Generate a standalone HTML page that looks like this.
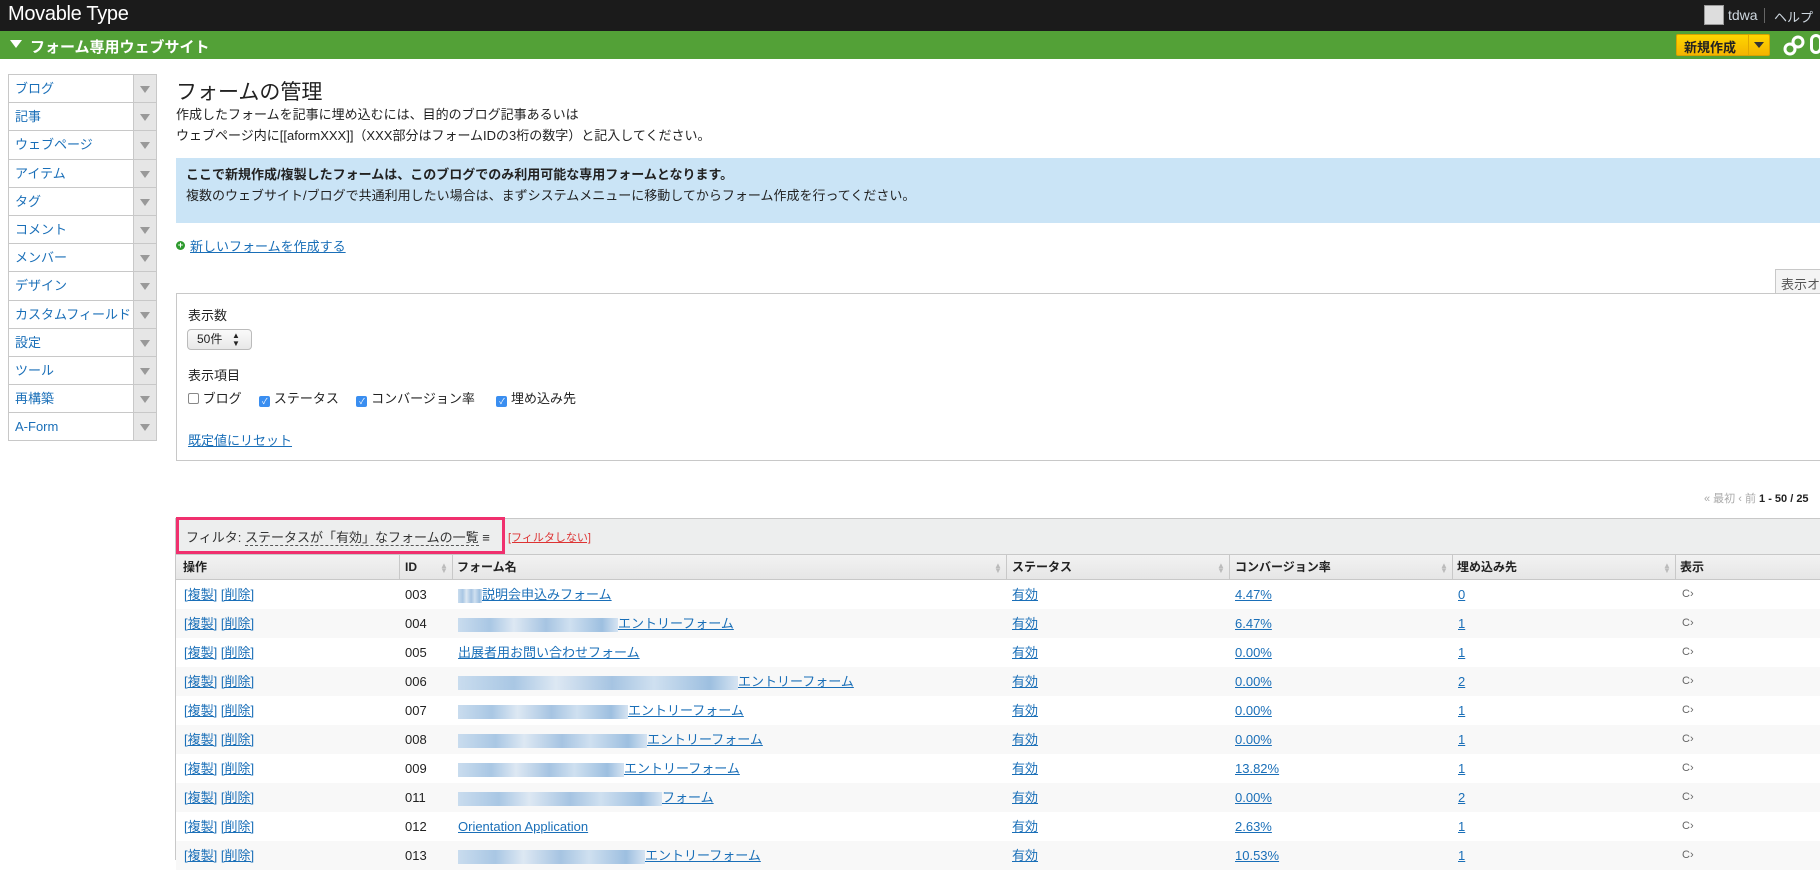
<!DOCTYPE html>
<html><head><meta charset="utf-8"><style>
*{box-sizing:border-box;margin:0;padding:0}
body{width:1820px;height:860px;overflow:hidden;background:#fff;font-family:"Liberation Sans","Noto Sans CJK JP",sans-serif;color:#222;position:relative;font-size:14px}
a{color:#1a6fb8}
.abs{position:absolute}
#top{left:0;top:0;width:1820px;height:31px;background:#1b1b1b}
#green{left:0;top:31px;width:1820px;height:28px;background:#53a137}
.side{left:8px;top:74px;width:149px;border:1px solid #c8c8c8;border-bottom:none}
.side div{height:28.2px;border-bottom:1px solid #c8c8c8;position:relative;font-size:13px;color:#1a6fb8;padding-left:6px;line-height:27px}
.side div:after{content:"";position:absolute;right:0;top:0;width:22px;height:100%;background:#e6e6e6;border-left:1px solid #c8c8c8}
.side div span{position:absolute;right:6px;top:11px;width:0;height:0;border-left:5px solid transparent;border-right:5px solid transparent;border-top:7px solid #999;z-index:2}
.row{position:absolute;left:176px;width:1644px;height:29px;font-size:13px;line-height:29px}
.row span{position:absolute}
.blur{display:inline-block;height:14px;vertical-align:middle;background:linear-gradient(90deg,#c9dcee,#a9c7e4 20%,#dde8f3 35%,#a6c4e2 55%,#cfe0f0 70%,#9dbfe0 90%,#d6e4f2)}
.th{position:absolute;top:0;font-size:12px;font-weight:bold;line-height:25px}
.sep{position:absolute;top:0;width:1px;height:25px;background:#c8c8c8}
.sort{position:absolute;top:8px;color:#bbb;font-size:8px;line-height:5px}
.cb{display:inline-block;width:11px;height:11px;background:#3a8ef0;border-radius:2px;vertical-align:-1px;color:#fff;font-size:8px;line-height:11px;text-align:center}
</style></head><body>
<div id="top" class="abs"></div>
<div class="abs" style="left:8px;top:3px;color:#fff;font-size:20px;letter-spacing:-0.3px">Movable Type</div>
<div class="abs" style="left:1704px;top:5px;width:20px;height:20px;background:#ddd;border:1px solid #999"></div>
<div class="abs" style="left:1728px;top:7px;color:#cfd8e0;font-size:14px">tdwa</div>
<div class="abs" style="left:1764px;top:8px;width:1px;height:15px;background:#666"></div>
<div class="abs" style="left:1774px;top:7px;color:#cfd8e0;font-size:13px">ヘルプ</div>
<div id="green" class="abs"></div>
<div class="abs" style="left:10px;top:40px;width:0;height:0;border-left:6px solid transparent;border-right:6px solid transparent;border-top:8px solid #fff"></div>
<div class="abs" style="left:30px;top:36px;color:#fff;font-size:15px;font-weight:bold">フォーム専用ウェブサイト</div>
<div class="abs" style="left:1676px;top:34px;width:94px;height:22px;background:linear-gradient(#ffd600,#f4b400);border-radius:2px;border:1px solid #d9a200"></div>
<div class="abs" style="left:1684px;top:37px;font-size:13px;font-weight:bold;color:#222">新規作成</div>
<div class="abs" style="left:1748px;top:35px;width:1px;height:20px;background:#e0a800"></div>
<div class="abs" style="left:1754px;top:42px;border-left:5px solid transparent;border-right:5px solid transparent;border-top:6px solid #333"></div>
<svg class="abs" style="left:1782px;top:34px" width="24" height="24" viewBox="0 0 24 24"><circle cx="8" cy="15" r="5" fill="none" stroke="#fff" stroke-width="3"/><circle cx="16" cy="8" r="5" fill="none" stroke="#fff" stroke-width="3"/></svg>
<div class="abs" style="left:1810px;top:34px;width:12px;height:20px;border:3px solid #fff;border-radius:8px"></div>

<div class="abs side">
<div>ブログ<span></span></div><div>記事<span></span></div><div>ウェブページ<span></span></div><div>アイテム<span></span></div><div>タグ<span></span></div><div>コメント<span></span></div><div>メンバー<span></span></div><div>デザイン<span></span></div><div>カスタムフィールド<span></span></div><div>設定<span></span></div><div>ツール<span></span></div><div>再構築<span></span></div><div>A-Form<span></span></div>
</div>

<div class="abs" style="left:176px;top:76px;font-size:21px">フォームの管理</div>
<div class="abs" style="left:176px;top:104px;font-size:13px;line-height:21px">作成したフォームを記事に埋め込むには、目的のブログ記事あるいは<br>ウェブページ内に[[aformXXX]]（XXX部分はフォームIDの3桁の数字）と記入してください。</div>
<div class="abs" style="left:176px;top:158px;width:1644px;height:65px;background:#cae4f6"></div>
<div class="abs" style="left:186px;top:164px;font-size:13px;line-height:21px"><b>ここで新規作成/複製したフォームは、このブログでのみ利用可能な専用フォームとなります。</b><br>複数のウェブサイト/ブログで共通利用したい場合は、まずシステムメニューに移動してからフォーム作成を行ってください。</div>
<div class="abs" style="left:176px;top:241px;width:9px;height:9px;border-radius:50%;background:#2e9a2e;color:#fff;font-size:9px;line-height:9px;text-align:center;font-weight:bold">+</div>
<div class="abs" style="left:190px;top:236px;font-size:13px"><a href="#">新しいフォームを作成する</a></div>

<div class="abs" style="left:1775px;top:269px;width:50px;height:25px;border:1px solid #c8c8c8;border-bottom:none;background:#f4f4f4;font-size:13px;padding:4px 0 0 5px;color:#555">表示オ</div>
<div class="abs" style="left:176px;top:293px;width:1650px;height:168px;border:1px solid #c8c8c8"></div>
<div class="abs" style="left:188px;top:305px;font-size:13px">表示数</div>
<div class="abs" style="left:187px;top:329px;width:65px;height:21px;border:1px solid #bbb;border-radius:4px;background:linear-gradient(#fafafa,#e8e8e8);font-size:12px;line-height:19px;padding-left:9px">50件<span style="position:absolute;left:44px;top:0;font-size:8px;line-height:8px;padding-top:2px">▲<br>▼</span></div>
<div class="abs" style="left:188px;top:365px;font-size:13px">表示項目</div>
<div class="abs" style="left:188px;top:390px;font-size:13px;line-height:18px">
<span style="display:inline-block;width:11px;height:11px;border:1px solid #888;border-radius:2px;vertical-align:-1px"></span> ブログ
<span class="cb" style="margin-left:14px">✓</span> ステータス
<span class="cb" style="margin-left:14px">✓</span> コンバージョン率
<span class="cb" style="margin-left:18px">✓</span> 埋め込み先</div>
<div class="abs" style="left:188px;top:430px;font-size:13px"><a href="#">既定値にリセット</a></div>

<div class="abs" style="left:1704px;top:490px;font-size:11px;color:#aaa">« 最初 ‹ 前 <b style="color:#222">1 - 50 / 25</b></div>

<div class="abs" style="left:175px;top:518px;width:1645px;height:37px;background:#edeeee;border-top:1px solid #c8c8c8;border-left:1px solid #c8c8c8"></div>
<div class="abs" style="left:176px;top:517px;width:329px;height:37px;border:3px solid #f0306e"></div>
<div class="abs" style="left:186px;top:527px;font-size:13px;color:#333">フィルタ: <span style="border-bottom:1px dashed #555">ステータスが「有効」なフォームの一覧</span> ≡</div>
<div class="abs" style="left:508px;top:529px;font-size:11px;color:#d33"><span style="text-decoration:underline">[フィルタしない]</span></div>

<div class="abs" style="left:175px;top:554px;width:1645px;height:26px;background:linear-gradient(#f2f2f2,#e6e6e6);border-top:1px solid #c8c8c8;border-bottom:1px solid #c8c8c8;border-left:1px solid #c8c8c8">
<span class="th" style="left:7px">操作</span><span class="sep" style="left:223px"></span>
<span class="th" style="left:229px">ID</span><span class="sort" style="left:264px">▲<br>▼</span><span class="sep" style="left:276px"></span>
<span class="th" style="left:281px">フォーム名</span><span class="sort" style="left:818px">▲<br>▼</span><span class="sep" style="left:830px"></span>
<span class="th" style="left:836px">ステータス</span><span class="sort" style="left:1041px">▲<br>▼</span><span class="sep" style="left:1053px"></span>
<span class="th" style="left:1059px">コンバージョン率</span><span class="sort" style="left:1264px">▲<br>▼</span><span class="sep" style="left:1276px"></span>
<span class="th" style="left:1281px">埋め込み先</span><span class="sort" style="left:1487px">▲<br>▼</span><span class="sep" style="left:1499px"></span>
<span class="th" style="left:1504px">表示</span></div>
<div class="abs" style="left:175px;top:580px;width:1px;height:280px;background:#c8c8c8"></div>

<div id="rows"></div>
<script>
var d=[["003",24,"説明会申込みフォーム","4.47%","0"],["004",160,"エントリーフォーム","6.47%","1"],["005",0,"出展者用お問い合わせフォーム","0.00%","1"],["006",280,"エントリーフォーム","0.00%","2"],["007",170,"エントリーフォーム","0.00%","1"],["008",189,"エントリーフォーム","0.00%","1"],["009",166,"エントリーフォーム","13.82%","1"],["011",204,"フォーム","0.00%","2"],["012",0,"Orientation Application","2.63%","1"],["013",187,"エントリーフォーム","10.53%","1"]];
var h="";d.forEach(function(r,i){var t=580+i*29;
h+='<div class="row" style="top:'+t+'px;background:'+(i%2?'#f8f8f8':'#fff')+'"><span style="left:8px"><a href="#">[複製]</a> <a href="#">[削除]</a></span><span style="left:229px">'+r[0]+'</span><span style="left:282px"><a href="#">'+(r[1]?'<span class="blur" style="position:static;width:'+r[1]+'px"></span>':'')+r[2]+'</a></span><span style="left:836px"><a href="#">有効</a></span><span style="left:1059px"><a href="#">'+r[3]+'</a></span><span style="left:1282px"><a href="#">'+r[4]+'</a></span><span style="left:1506px;color:#666;font-size:11px">C›</span></div>';});
document.getElementById("rows").innerHTML=h;
</script>
</body></html>
